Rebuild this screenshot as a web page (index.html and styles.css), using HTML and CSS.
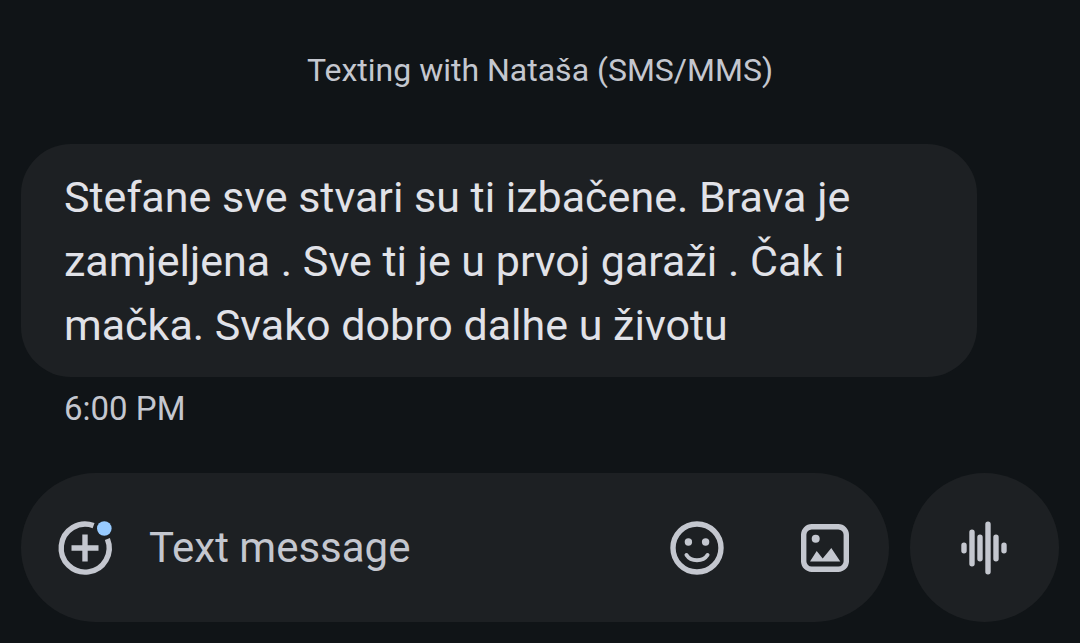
FILE: index.html
```html
<!DOCTYPE html>
<html lang="en">
<head>
    <meta charset="UTF-8">
    <meta name="viewport" content="width=device-width, initial-scale=1.0">
    <title>Messages</title>
    <link rel="stylesheet" href="styles.css">
</head>
<body>
    <main class="chat">
        <p class="chat-info">Texting with Nataša (SMS/MMS)</p>

        <div class="message" lang="sr-Latn">
            <p class="bubble">Stefane sve stvari su ti izbačene. Brava je<br>zamjeljena . Sve ti je u prvoj garaži . Čak i<br>mačka. Svako dobro dalhe u životu</p>
        </div>
        <time class="time" datetime="18:00">6:00 PM</time>

        <form class="composer">
            <div class="field">
                <button type="button" class="icon-btn" aria-label="Add attachment">
                    <svg viewBox="0 0 64 64">
                        <path class="ring" d="M40.6 9.6A24 24 0 1 0 54.4 23"/>
                        <path class="plus" d="M18.5 32h27M32 18.5v27"/>
                        <circle class="dot" cx="51.3" cy="12.5" r="7.3"/>
                    </svg>
                </button>
                <input class="text" type="text" placeholder="Text message" aria-label="Text message">
                <button type="button" class="icon-btn emoji" aria-label="Emoji">
                    <svg viewBox="0 0 64 64">
                        <circle class="ring" cx="32" cy="32" r="24"/>
                        <circle cx="23.4" cy="26" r="3.7"/>
                        <circle cx="40.6" cy="26" r="3.7"/>
                        <path class="mouth" d="M21.5 39C26 46 38 46 42.5 39"/>
                    </svg>
                </button>
                <button type="button" class="icon-btn" aria-label="Gallery">
                    <svg viewBox="0 0 64 64">
                        <rect class="ring" x="10.7" y="10.7" width="42.6" height="42.6" rx="8"/>
                        <circle cx="22.7" cy="22.7" r="4"/>
                        <path d="M17 45.5L23.7 35L29.7 42.5L38.3 32L47.3 45.5Z"/>
                    </svg>
                </button>
            </div>
            <button type="button" class="voice" aria-label="Voice message">
                <svg viewBox="0 0 64 64">
                    <path class="wave" d="M11 29.3v5.4M19 16.2v31.6M27 21.3v21.4M35 8.2v47.6M43 21.3v21.4M51 29.3v5.4"/>
                </svg>
            </button>
        </form>
    </main>
</body>
</html>
```
FILE: styles.css
```css
* {
    box-sizing: border-box;
}

body {
    margin: 0;
    background-color: #101417;
    color: #c4c7cf;
    font-family: Roboto, "Open Sans", sans-serif;
}

.chat {
    padding: 48px 21px 21px;
}

.chat-info {
    margin: 0 0 52px;
    font-size: 32px;
    line-height: 44px;
    text-align: center;
}

.message {
    padding-right: 82px;
}

.bubble {
    margin: 0;
    padding: 21px 43px 20px;
    border-radius: 50px;
    background-color: #1d2023;
    color: #e1e2e8;
    font-size: 43px;
    line-height: 64px;
}

.time {
    display: block;
    margin: 10px 43px 42px;
    font-size: 33px;
    line-height: 44px;
}

.composer {
    display: flex;
    gap: 21px;
}

.field {
    display: flex;
    flex: 1;
    align-items: center;
    min-width: 0;
    height: 149px;
    padding: 0 32px;
    border-radius: 75px;
    background-color: #1d2023;
}

button {
    display: flex;
    flex: none;
    align-items: center;
    justify-content: center;
    padding: 0;
    border: none;
    background: none;
    cursor: pointer;
}

svg {
    display: block;
    width: 64px;
    height: 64px;
    fill: #c4c7cf;
}

.emoji {
    margin-right: 64px;
}

.text {
    flex: 1;
    min-width: 0;
    padding: 0 32px;
    border: none;
    outline: none;
    background: none;
    color: #e1e2e8;
    font-family: inherit;
    font-size: 42px;
    line-height: 64px;
}

.text::placeholder {
    color: #c4c7cf;
    opacity: 1;
}

.voice {
    width: 149px;
    height: 149px;
    border-radius: 50%;
    background-color: #1d2023;
}

.ring,
.plus,
.mouth,
.wave {
    fill: none;
    stroke: #c4c7cf;
    stroke-width: 5.4;
}

.mouth {
    stroke-width: 4;
    stroke-linecap: round;
}

.wave {
    stroke-linecap: round;
}

.dot {
    fill: #98cbff;
}
```
